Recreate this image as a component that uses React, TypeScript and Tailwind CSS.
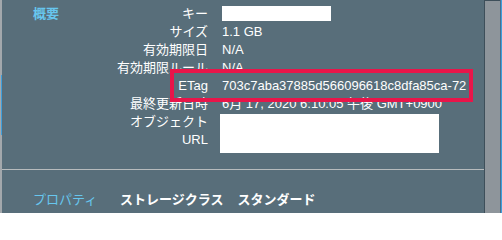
import React from 'react'

const rows: { label: string; value: React.ReactNode }[] = [
  { label: 'キー', value: <div className="mt-[1px] h-[15px] w-[109px] bg-white" /> },
  { label: 'サイズ', value: '1.1 GB' },
  { label: '有効期限日', value: 'N/A' },
  { label: '有効期限ルール', value: 'N/A' },
  { label: 'ETag', value: '703c7aba37885d566096618c8dfa85ca-72' },
  { label: '最終更新日時', value: '6月 17, 2020 6:10:05 午後 GMT+0900' },
]

export default function App() {
  return (
    <div
      className="flex h-[213px] w-[502px] overflow-hidden bg-[#586e7a] text-[13px] text-white"
      style={{ fontFamily: '"Liberation Sans", "Noto Sans CJK JP", sans-serif' }}
    >
      {/* left edge */}
      <div className="flex w-[2px] shrink-0">
        <div className="w-[1px] bg-[#a3a8ac]" />
        <div className="flex w-[1px] flex-col">
          <div className="h-[75px] bg-[#a3a8ac]" />
          <div className="h-[60px] bg-[#3f9fdc]" />
          <div className="flex-1 bg-[#a3a8ac]" />
        </div>
      </div>

      {/* main panel */}
      <div className="relative flex w-[482px] shrink-0 flex-col">
        <div className="flex pt-[5px]">
          <div className="w-[100px] pl-[31px] font-bold leading-[18px] text-[#67c6ee]">概要</div>
          <div className="grid grid-cols-[106px_auto] gap-x-[14px]">
            {rows.map((r) => (
              <React.Fragment key={r.label}>
                <div className="whitespace-nowrap text-right leading-[18px]">{r.label}</div>
                <div className="whitespace-nowrap leading-[18px]">{r.value}</div>
              </React.Fragment>
            ))}
            <div className="text-right leading-[18px]">
              <div>オブジェクト</div>
              <div>URL</div>
            </div>
            <div className="-ml-[2px] mt-[1px] h-[39px] w-[219px] bg-white" />
          </div>
        </div>

        <div className="mt-[16px] h-[1px] w-full bg-[#b7bbbd]" />

        <div className="mt-[21px] flex leading-[18px]">
          <div className="w-[118px] pl-[31px] text-[#67c6ee]">プロパティ</div>
          <div className="font-bold">ストレージクラス</div>
          <div className="ml-[14px] font-bold">スタンダード</div>
        </div>

        {/* highlight box */}
        <div className="absolute left-[168px] top-[69px] h-[33px] w-[303px] border-4 border-[#e8154a]" />
      </div>

      {/* scrollbar */}
      <div className="w-[1px] shrink-0 bg-[#3e4f5a]" />
      <div className="flex w-[15px] shrink-0 flex-col bg-[#8e959b]">
        <div className="h-[1px] bg-[#3e4f5a]" />
      </div>
      <div className="w-[1px] shrink-0 bg-[#4a6f8c]" />
      <div className="w-[1px] shrink-0 bg-[#3f9fdc]" />
    </div>
  )
}
